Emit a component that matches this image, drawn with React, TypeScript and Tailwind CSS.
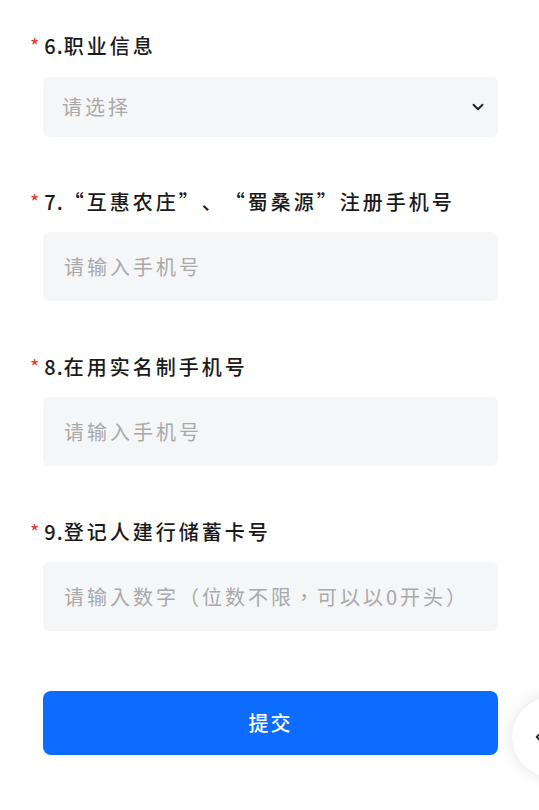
import { ChevronDown, ChevronLeft } from "lucide-react";

const font = { fontFamily: '"Noto Sans CJK SC", "Noto Sans", sans-serif' };

function Label({ num, text }: { num: string; text: string }) {
  return (
    <div className="flex h-7 items-center text-[20px] font-medium leading-7 tracking-[3px] text-[#1a1a1a] [text-spacing-trim:space-all]">
      <span className="mr-[2px] font-normal text-[#e2352f]">*</span>
      <span className="tracking-[1px]">{num}</span>
      <span className="[font-feature-settings:'fwid']">{text}</span>
    </div>
  );
}

function TextField({ placeholder, tc }: { placeholder: string; tc?: boolean }) {
  return (
    <div
      className="flex h-[69px] items-center rounded-[6px] bg-[#f5f6f8] px-[21px] text-[20px] tracking-[3px] text-[#a9a9a9] [text-spacing-trim:space-all]"
      style={tc ? { fontFamily: '"Noto Sans CJK TC", sans-serif' } : undefined}
    >
      {placeholder}
    </div>
  );
}

export default function App() {
  return (
    <div className="relative h-[810px] w-[539px] overflow-hidden bg-white" style={font}>
      <div className="flex flex-col pl-[30px] pr-[41px] pt-[32px]">
        <Label num="6." text="职业信息" />
        <div className="ml-[13px] mt-[17px] flex h-[60px] items-center justify-between rounded-[6px] bg-[#f5f6f8] pl-[19px] pr-[11px] text-[20px] tracking-[3px] text-[#a9a9a9]">
          <span>请选择</span>
          <ChevronDown className="h-[18px] w-[18px] text-[#222]" strokeWidth={2.5} />
        </div>

        <div className="mt-[51px]">
          <Label num="7." text="“互惠农庄”、“蜀桑源”注册手机号" />
        </div>
        <div className="ml-[13px] mt-[16px]">
          <TextField placeholder="请输入手机号" />
        </div>

        <div className="mt-[52px]">
          <Label num="8." text="在用实名制手机号" />
        </div>
        <div className="ml-[13px] mt-[16px]">
          <TextField placeholder="请输入手机号" />
        </div>

        <div className="mt-[52px]">
          <Label num="9." text="登记人建行储蓄卡号" />
        </div>
        <div className="ml-[13px] mt-[16px]">
          <TextField placeholder="请输入数字（位数不限，可以以0开头）" tc />
        </div>

        <button className="ml-[13px] mt-[60px] flex h-[64px] items-center justify-center rounded-[8px] bg-[#0b6cff] text-[20px] font-medium tracking-[2px] text-white">
          提交
        </button>
      </div>

      <div className="absolute left-[512px] top-[697px] flex h-[80px] w-[80px] items-center rounded-full bg-white pl-[18px] shadow-[0_0_16px_rgba(0,0,0,0.12)]">
        <ChevronLeft className="h-[18px] w-[18px] text-[#222]" strokeWidth={2.5} />
      </div>
    </div>
  );
}
